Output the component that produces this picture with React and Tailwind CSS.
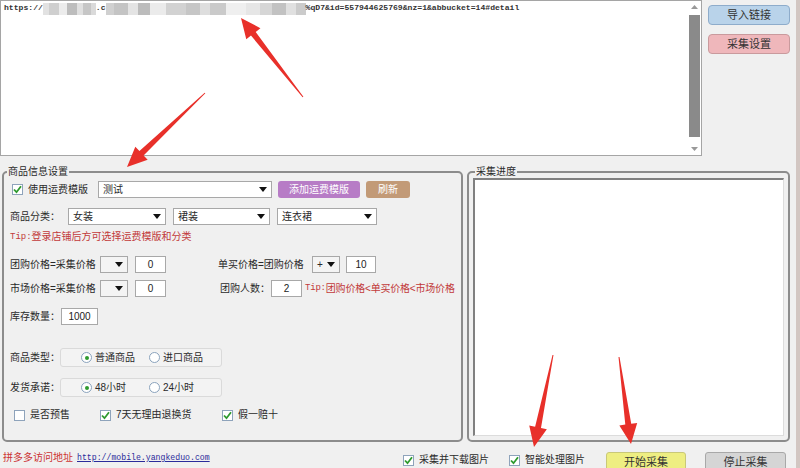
import React from 'react';

// mosaic blocks used to mask part of the pasted url
const maskA = [
  [6, '#e2e2e2'], [10, '#cfcfcf'], [8, '#ececec'], [10, '#bdbdbd'], [6, '#e0e0e0'], [8, '#c6c6c6'], [5, '#dadada'],
];
const maskB = [
  [8, '#d0d0d0'], [14, '#c4c4c4'], [10, '#e4e4e4'], [12, '#bcbcbc'], [16, '#ebebeb'], [20, '#d2d2d2'], [14, '#c6c6c6'],
  [10, '#dedede'], [16, '#cacaca'], [20, '#efefef'], [14, '#e6e6e6'], [12, '#d6d6d6'], [14, '#c2c2c2'], [10, '#e0e0e0'], [10, '#cbcbcb'],
];

const arrows = [
  [[303, 97], [241, 18]],
  [[205, 93], [127, 167]],
  [[553, 355], [534, 447]],
  [[619, 357], [631, 444]],
];

function arrowPoints([tx, ty], [px, py]) {
  const len = Math.hypot(px - tx, py - ty);
  const dx = (px - tx) / len;
  const dy = (py - ty) / len;
  const nx = -dy;
  const ny = dx;
  const bx = px - dx * 20;
  const by = py - dy * 20;
  const pts = [
    [tx + nx * 0.5, ty + ny * 0.5],
    [bx + nx * 3, by + ny * 3],
    [bx + nx * 9, by + ny * 9],
    [px, py],
    [bx - nx * 9, by - ny * 9],
    [bx - nx * 3, by - ny * 3],
    [tx - nx * 0.5, ty - ny * 0.5],
  ];
  return pts.map((p) => p.join(',')).join(' ');
}

function Check({ on }) {
  return (
    <span className="flex h-[11px] w-[11px] shrink-0 items-center justify-center border border-[#8ea3bb] bg-white">
      {on && (
        <svg width="9" height="9" viewBox="0 0 9 9">
          <path d="M1 4.5 L3.5 7.2 L8 1.2" fill="none" stroke="#2e9a2e" strokeWidth="1.8" />
        </svg>
      )}
    </span>
  );
}

function Radio({ on }) {
  return (
    <span className="flex h-[11px] w-[11px] shrink-0 items-center justify-center rounded-full border border-[#8aa3bd] bg-white">
      {on && <span className="h-[4px] w-[4px] rounded-full bg-[#2e9a2e]" />}
    </span>
  );
}

function Caret() {
  return (
    <svg width="8" height="5" viewBox="0 0 8 5" className="shrink-0">
      <path d="M0 0 H8 L4 5 Z" fill="#111" />
    </svg>
  );
}

function Select({ className, text, light }) {
  return (
    <div
      className={`flex h-[17px] shrink-0 items-center justify-between border border-[#a8a8a8] px-[4px] ${
        light ? 'bg-[#f4f4f4]' : 'bg-white'
      } ${className}`}
    >
      <span>{text}</span>
      <Caret />
    </div>
  );
}

function Input({ className, value }) {
  return (
    <div
      className={`flex h-[17px] shrink-0 items-center justify-center border border-[#a8a8a8] bg-white text-[10px] text-[#222] ${className}`}
    >
      {value}
    </div>
  );
}

export default function App() {
  return (
    <div className="relative h-[468px] w-[800px] overflow-hidden border-r-4 border-[#d2c6c2] bg-[#f0f0f0] font-['Liberation_Sans','Noto_Sans_CJK_SC',sans-serif] text-[10px] leading-none text-[#2a2a2a]">
      {/* url list + side buttons */}
      <div className="flex">
        <div className="flex h-[156px] w-[702px] border border-[#a5a5a5] bg-white">
          <div className="flex-1 overflow-hidden">
            <div className="flex h-[12px] items-center whitespace-nowrap pl-[3px] pt-[3px] font-['Liberation_Mono',monospace] text-[8.1px] font-bold text-[#333]">
              <span>https://</span>
              <span className="flex h-[12px]">
                {maskA.map(([w, c], i) => (
                  <span key={i} className="h-full" style={{ width: w, background: c }} />
                ))}
              </span>
              <span>.c</span>
              <span className="flex h-[12px]">
                {maskB.map(([w, c], i) => (
                  <span key={i} className="h-full" style={{ width: w, background: c }} />
                ))}
              </span>
              <span>%qD7&amp;id=557944625769&amp;nz=1&amp;abbucket=14#detail</span>
            </div>
          </div>
          <div className="flex w-[14px] flex-col items-center py-[4px]">
            <svg width="7" height="4" viewBox="0 0 7 4">
              <path d="M0 4 L3.5 0 L7 4 Z" fill="#999" />
            </svg>
            <div className="mt-[6px] h-[122px] w-[11px] bg-[#8a8a8a]" />
            <div className="flex-1" />
            <svg width="7" height="4" viewBox="0 0 7 4">
              <path d="M0 0 L3.5 4 L7 0 Z" fill="#999" />
            </svg>
          </div>
        </div>
        <div className="ml-[6px] flex flex-col gap-[9px] pt-[5px] text-[11px]">
          <button className="h-[20px] w-[82px] rounded-[4px] border border-[#8eaccb] bg-[#b9d3ea] text-[#333]">导入链接</button>
          <button className="h-[20px] w-[82px] rounded-[4px] border border-[#c99a9d] bg-[#efb7bb] text-[#333]">采集设置</button>
        </div>
      </div>

      {/* settings + progress */}
      <div className="mt-[9px] flex">
        <fieldset className="ml-[2px] h-[277px] w-[461px] rounded-[5px] border-2 border-[#8c8c8c]">
          <legend className="ml-[3px] h-[13px] px-[1px] leading-[13px]">商品信息设置</legend>
          <div className="flex flex-col pl-[6px]">
            <div className="mt-[3px] flex h-[17px] items-center">
              <span className="ml-[2px]"><Check on /></span>
              <span className="ml-[5px] w-[70px]">使用运费模版</span>
              <Select className="w-[174px]" text="测试" />
              <button className="ml-[6px] h-[17px] w-[82px] rounded-[3px] bg-[#b77cc6] text-white">添加运费模版</button>
              <button className="ml-[6px] h-[17px] w-[44px] rounded-[3px] bg-[#c29a77] text-white">刷新</button>
            </div>
            <div className="mt-[10px] flex h-[17px] items-center">
              <span className="w-[58px]">商品分类：</span>
              <Select className="w-[98px]" text="女装" />
              <Select className="ml-[7px] w-[97px]" text="裙装" />
              <Select className="ml-[7px] w-[100px]" text="连衣裙" />
            </div>
            <div className="mt-[6px] flex h-[12px] items-center text-[#c23a3a]">
              <span className="font-['Liberation_Mono',monospace] text-[9px]">Tip:</span>
              <span>登录店铺后方可选择运费模版和分类</span>
            </div>
            <div className="mt-[13px] flex h-[17px] items-center">
              <span className="w-[90px]">团购价格=采集价格</span>
              <Select className="w-[28px]" light text="" />
              <Input className="ml-[7px] w-[31px]" value="0" />
              <span className="ml-[52px] w-[94px]">单买价格=团购价格</span>
              <Select className="w-[28px]" light text="+" />
              <Input className="ml-[6px] w-[30px]" value="10" />
            </div>
            <div className="mt-[7px] flex h-[17px] items-center">
              <span className="w-[90px]">市场价格=采集价格</span>
              <Select className="w-[28px]" light text="" />
              <Input className="ml-[7px] w-[31px]" value="0" />
              <span className="ml-[54px] w-[51px]">团购人数：</span>
              <Input className="w-[31px]" value="2" />
              <span className="ml-[3px] flex items-center tracking-[-0.2px] text-[#c23a3a]">
                <span className="font-['Liberation_Mono',monospace] text-[9px]">Tip:</span>
                <span>团购价格&lt;单买价格&lt;市场价格</span>
              </span>
            </div>
            <div className="mt-[11px] flex h-[17px] items-center">
              <span className="w-[51px]">库存数量：</span>
              <Input className="w-[37px]" value="1000" />
            </div>
            <div className="mt-[23px] flex h-[19px] items-center">
              <span className="w-[50px]">商品类型：</span>
              <div className="flex h-[19px] w-[162px] items-center rounded-[3px] border border-[#dadada] bg-[#f3f3f3] pl-[20px]">
                <span className="flex w-[68px] items-center gap-[3px]"><Radio on />普通商品</span>
                <span className="flex items-center gap-[3px]"><Radio />进口商品</span>
              </div>
            </div>
            <div className="mt-[11px] flex h-[19px] items-center">
              <span className="w-[50px]">发货承诺：</span>
              <div className="flex h-[19px] w-[162px] items-center rounded-[3px] border border-[#dadada] bg-[#f3f3f3] pl-[20px]">
                <span className="flex w-[68px] items-center gap-[3px]"><Radio on />48小时</span>
                <span className="flex items-center gap-[3px]"><Radio />24小时</span>
              </div>
            </div>
            <div className="mt-[11px] flex h-[14px] items-center">
              <span className="ml-[4px] flex w-[86px] items-center gap-[5px]"><Check />是否预售</span>
              <span className="flex w-[122px] items-center gap-[5px]"><Check on />7天无理由退换货</span>
              <span className="flex items-center gap-[5px]"><Check on />假一赔十</span>
            </div>
          </div>
        </fieldset>

        <fieldset className="ml-[4px] h-[277px] w-[323px] rounded-[5px] border-2 border-[#8c8c8c]">
          <legend className="ml-[6px] h-[13px] px-[1px] leading-[13px]">采集进度</legend>
          <div className="ml-[4px] h-[258px] w-[311px] border-b border-l-2 border-r border-t-2 border-b-[#dcdcdc] border-l-[#808080] border-r-[#dcdcdc] border-t-[#808080] bg-white" />
        </fieldset>
      </div>

      {/* footer */}
      <div className="mt-[6px] flex h-[20px] items-center">
        <span className="w-[77px] pl-[3px] text-[#cc3333]">拼多多访问地址</span>
        <span className="w-[326px] font-['Liberation_Mono',monospace] text-[8.2px] text-[#2b2b9a] underline">http://mobile.yangkeduo.com</span>
        <span className="mt-[4px] flex w-[106px] items-center gap-[5px]"><Check on />采集并下载图片</span>
        <span className="mt-[4px] flex w-[97px] items-center gap-[5px]"><Check on />智能处理图片</span>
        <button className="mt-[4px] h-[20px] w-[80px] self-start rounded-[3px] border border-[#c9c878] bg-[#eeee82] text-[11px] text-[#333]">开始采集</button>
        <button className="ml-[19px] mt-[4px] h-[20px] w-[81px] self-start rounded-[3px] border border-[#a8a8a8] bg-[#d5d5d5] text-[11px] text-[#333]">停止采集</button>
      </div>

      {/* red pointer arrows drawn over the window */}
      <svg className="pointer-events-none absolute inset-0" width="800" height="468">
        {arrows.map(([t, p], i) => (
          <polygon key={i} points={arrowPoints(t, p)} fill="#e8302a" />
        ))}
      </svg>
    </div>
  );
}
